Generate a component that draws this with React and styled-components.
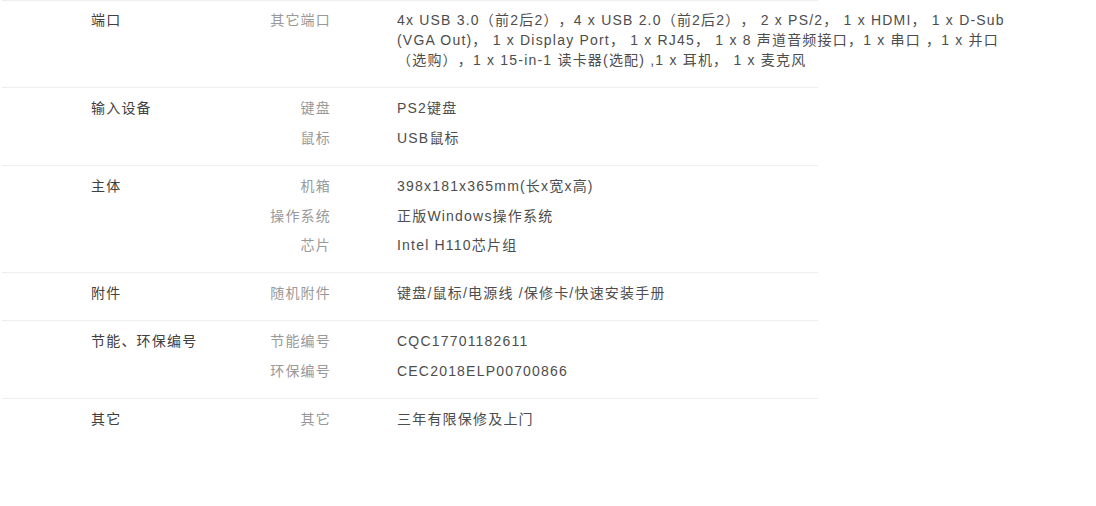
import React from 'react'
import styled, { createGlobalStyle } from 'styled-components'

const GlobalStyle = createGlobalStyle`
    body{
        margin:0;
        background:#fff;
        font-family:"Liberation Sans", Arial, "Noto Sans CJK SC", sans-serif;
    }
`

const Page = styled.div`
    padding-left:2px;
    width:1094px;
    height:506px;
    overflow:hidden;
`

const SpecTable = styled.div`
    width:816px;
    border-top:1px solid #eeeeee;
`

const SpecRow = styled.div`
    display:flex;
    align-items:flex-start;
    padding:${p => (p.first ? '9px' : '10px')} 0 17px 89px;
    border-bottom:1px solid ${p => (p.last ? 'transparent' : '#eeeeee')};
    font-size:14px;
    line-height:20px;
    letter-spacing:1.2px;
    text-spacing-trim:space-all;
`

const Title = styled.div`
    width:150px;
    flex-shrink:0;
    color:#404040;
`

const Items = styled.div`
    display:flex;
    flex-direction:column;
    gap:9.75px;
`

const Item = styled.div`
    display:flex;
`

const Label = styled.div`
    width:90px;
    flex-shrink:0;
    text-align:right;
    color:#999;
`

const Value = styled.div`
    margin-left:66px;
    width:630px;
    flex-shrink:0;
    color:#4d4d4d;
`

const specs = [
    {
        title: '端口',
        items: [
            ['其它端口', '4x USB 3.0（前2后2），4 x USB 2.0（前2后2）， 2 x PS/2， 1 x HDMI， 1 x D-Sub (VGA Out)， 1 x Display Port， 1 x RJ45， 1 x 8 声道音频接口，1 x 串口 ，1 x 并口（选购），1 x 15-in-1 读卡器(选配) ,1 x 耳机， 1 x 麦克风'],
        ],
    },
    {
        title: '输入设备',
        items: [
            ['键盘', 'PS2键盘'],
            ['鼠标', 'USB鼠标'],
        ],
    },
    {
        title: '主体',
        items: [
            ['机箱', '398x181x365mm(长x宽x高)'],
            ['操作系统', '正版Windows操作系统'],
            ['芯片', 'Intel H110芯片组'],
        ],
    },
    {
        title: '附件',
        items: [['随机附件', '键盘/鼠标/电源线 /保修卡/快速安装手册']],
    },
    {
        title: '节能、环保编号',
        items: [
            ['节能编号', 'CQC17701182611'],
            ['环保编号', 'CEC2018ELP00700866'],
        ],
    },
    {
        title: '其它',
        items: [['其它', '三年有限保修及上门']],
    },
]

const App = () => {
    return (
        <Page>
            <GlobalStyle />
            <SpecTable>
                {specs.map((row, i) => (
                    <SpecRow key={row.title} first={i === 0} last={i === specs.length - 1}>
                        <Title>{row.title}</Title>
                        <Items>
                            {row.items.map(([label, value]) => (
                                <Item key={label}>
                                    <Label>{label}</Label>
                                    <Value>{value}</Value>
                                </Item>
                            ))}
                        </Items>
                    </SpecRow>
                ))}
            </SpecTable>
        </Page>
    )
}

export default App
